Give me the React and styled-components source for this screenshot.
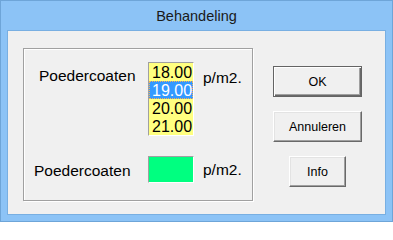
import React from "react";
import styled, { createGlobalStyle } from "styled-components";

const Global = createGlobalStyle`
  html, body { margin: 0; padding: 0; background: #ffffff; }
  * { box-sizing: border-box; }
`;

const Frame = styled.div`
  width: 393px;
  height: 222px;
  background: #8cc3f6;
  border: 1px solid #6ea5d8;
  display: flex;
  flex-direction: column;
  font-family: "Liberation Sans", Arial, sans-serif;
`;

const TitleBar = styled.div`
  height: 29px;
  display: flex;
  align-items: center;
  justify-content: center;
  font-size: 14.5px;
  color: #1a1a1a;
`;

const Client = styled.div`
  height: 185px;
  margin: 0 6px;
  background: #f0f0f0;
  border: 1px solid #78afe2;
  display: flex;
  align-items: flex-start;
  padding: 17px 0 0 15px;
`;

const GroupBox = styled.div`
  width: 230px;
  height: 153px;
  border: 1px solid #a0a0a0;
  box-shadow: inset 1px 1px #ffffff, 1px 1px #ffffff;
  display: grid;
  grid-template-columns: 124px 46px 1fr;
  grid-template-rows: 74px 27px;
  row-gap: 20px;
  padding-top: 13px;
  align-items: start;
`;

const Label = styled.div`
  font-size: 15.5px;
  line-height: 18px;
  color: #000;
  padding-left: ${(p) => p.$indent}px;
  margin-top: ${(p) => p.$top}px;
  white-space: nowrap;
`;

const Unit = styled.div`
  font-size: 15.5px;
  line-height: 18px;
  color: #000;
  padding-left: 9px;
  margin-top: ${(p) => p.$top}px;
  white-space: nowrap;
`;

const ListBox = styled.div`
  width: 46px;
  height: 74px;
  border: 1px solid;
  border-color: #a0a0a0 #ffffff #ffffff #a0a0a0;
  background: #ffff80;
  display: flex;
  flex-direction: column;
`;

const ListItem = styled.div`
  height: 18px;
  font-size: 16px;
  line-height: 17px;
  padding: 1px 0 0 3px;
  color: ${(p) => (p.$selected ? "#ffffff" : "#000000")};
  background: ${(p) => (p.$selected ? "#3399ff" : "#ffff80")};
  outline: ${(p) => (p.$selected ? "1px dotted #f2b25c" : "none")};
  outline-offset: -1px;
  white-space: nowrap;
  overflow: hidden;
`;

const ColorBox = styled.div`
  width: 46px;
  height: 27px;
  border: 1px solid;
  border-color: #a0a0a0 #ffffff #ffffff #a0a0a0;
  background: #00ff80;
`;

const ButtonColumn = styled.div`
  width: 89px;
  margin-left: 20px;
  margin-top: 18px;
  display: flex;
  flex-direction: column;
  align-items: center;
  gap: 14px;
`;

const Button = styled.div`
  width: ${(p) => p.$w}px;
  height: 31px;
  display: flex;
  align-items: center;
  justify-content: center;
  font-size: 12.5px;
  color: #000;
  background: #f0f0f0;
  border: 1px solid;
  border-color: ${(p) =>
    p.$default ? "#646464" : "#ffffff #696969 #696969 #ffffff"};
  box-shadow: ${(p) =>
    p.$default
      ? "inset 1px 1px #ffffff, inset -1px -1px #696969, inset -2px -2px #a0a0a0"
      : "inset -1px -1px #a0a0a0, inset 1px 1px #e3e3e3"};
`;

const values = ["18.00", "19.00", "20.00", "21.00"];

export default function App() {
  return (
    <>
      <Global />
      <Frame>
        <TitleBar>Behandeling</TitleBar>
        <Client>
          <GroupBox>
            <Label $indent={15} $top={5}>Poedercoaten</Label>
            <ListBox>
              {values.map((v) => (
                <ListItem key={v} $selected={v === "19.00"}>
                  {v}
                </ListItem>
              ))}
            </ListBox>
            <Unit $top={7}>p/m2.</Unit>
            <Label $indent={10} $top={6}>Poedercoaten</Label>
            <ColorBox />
            <Unit $top={5}>p/m2.</Unit>
          </GroupBox>
          <ButtonColumn>
            <Button $w={89} $default>OK</Button>
            <Button $w={89}>Annuleren</Button>
            <Button $w={57}>Info</Button>
          </ButtonColumn>
        </Client>
      </Frame>
    </>
  );
}
